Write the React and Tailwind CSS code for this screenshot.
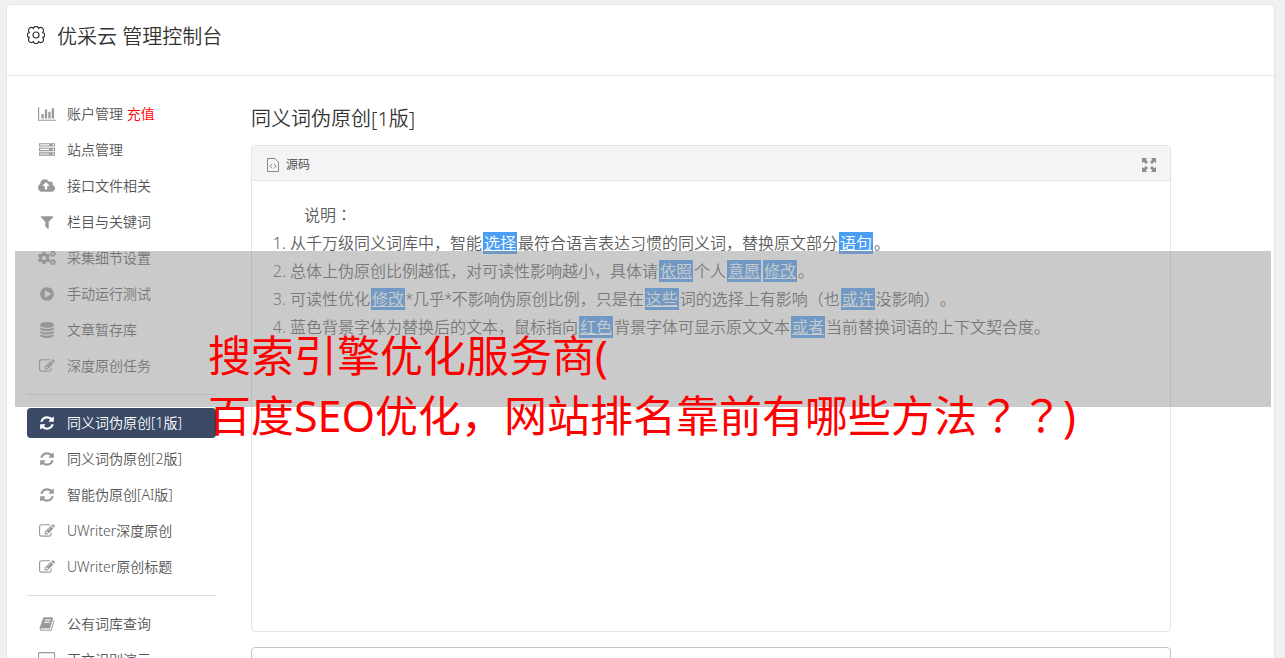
import { FaCogs } from 'react-icons/fa';

const paths = {
  chart: 'M640 896v512h-256v-512h256zm384-512v1024h-256v-1024h256zm1024 1152v128h-2048v-1536h128v1408h1920zm-640-896v768h-256v-768h256zm384-384v1152h-256v-1152h256z',
  server: 'M128 1408h1024v-128h-1024v128zm0-512h1024v-128h-1024v128zm1568 448q0-40-28-68t-68-28-68 28-28 68 28 68 68 28 68-28 28-68zm-1568-960h1024v-128h-1024v128zm1568 448q0-40-28-68t-68-28-68 28-28 68 28 68 68 28 68-28 28-68zm0-512q0-40-28-68t-68-28-68 28-28 68 28 68 68 28 68-28 28-68zm96 832v384h-1792v-384h1792zm0-512v384h-1792v-384h1792zm0-512v384h-1792v-384h1792z',
  cloud: 'M1280 864q0-14-9-23l-352-352q-9-9-23-9t-23 9l-351 351q-10 12-10 24 0 14 9 23t23 9h224v352q0 13 9.500 22.500t22.500 9.500h192q13 0 22.500-9.500t9.500-22.500v-352h224q13 0 22.500-9.500t9.500-22.500zm640 288q0 159-112.500 271.500t-271.500 112.500h-1088q-185 0-316.500-131.500t-131.500-316.500q0-130 70-240t188-165q-2-30-2-43 0-212 150-362t362-150q156 0 285.500 87t188.500 231q71-62 166-62 106 0 181 75t75 181q0 76-41 138 130 31 213.500 135.500t83.500 238.500z',
  filter: 'M1595 295q17 41-14 70l-493 493v742q0 42-39 59-13 5-25 5-27 0-45-19l-256-256q-19-19-19-45v-486l-493-493q-31-29-14-70 17-39 59-39h1280q42 0 59 39z',
  play: 'M896 128q209 0 385.500 103t279.500 279.500 103 385.500-103 385.500-279.500 279.500-385.500 103-385.500-103-279.500-279.500-103-385.500 103-385.500 279.500-279.500 385.500-103zm384 823q32-18 32-55t-32-55l-544-320q-31-19-64-1-32 19-32 56v640q0 37 32 56 16 8 32 8 17 0 32-9z',
  database: 'M896 768q237 0 443-43t325-127v170q0 69-103 128t-280 93.500-385 34.500-385-34.500-280-93.500-103-128v-170q119 84 325 127t443 43zm0 768q237 0 443-43t325-127v170q0 69-103 128t-280 93.500-385 34.500-385-34.500-280-93.500-103-128v-170q119 84 325 127t443 43zm0-384q237 0 443-43t325-127v170q0 69-103 128t-280 93.500-385 34.500-385-34.500-280-93.500-103-128v-170q119 84 325 127t443 43zm0-1152q208 0 385 34.500t280 93.500 103 128v128q0 69-103 128t-280 93.500-385 34.500-385-34.500-280-93.500-103-128v-128q0-69 103-128t280-93.500 385-34.500z',
  edit: 'M888 1184l116-116-152-152-116 116v56h96v96h56zm440-720q-16-16-33 1l-350 350q-17 17-1 33t33-1l350-350q17-17 1-33zm80 594v190q0 119-84.500 203.500t-203.500 84.500h-832q-119 0-203.500-84.500t-84.500-203.500v-832q0-119 84.500-203.500t203.500-84.500h832q63 0 117 25 15 7 18 23 3 17-9 29l-49 49q-14 14-32 8-23-6-45-6h-832q-66 0-113 47t-47 113v832q0 66 47 113t113 47h832q66 0 113-47t47-113v-126q0-13 9-22l64-64q15-15 35-7t20 29zm-96-738l288 288-672 672h-288v-288zm444 132l-92 92-288-288 92-92q28-28 68-28t68 28l152 152q28 28 28 68t-28 68z',
  refresh: 'M1639 1056q0 5-1 7-64 268-268 434.500t-478 166.500q-146 0-282.500-55t-243.500-157l-129 129q-19 19-45 19t-45-19-19-45v-448q0-26 19-45t45-19h448q26 0 45 19t19 45-19 45l-137 137q71 66 161 102t187 36q134 0 250-65t186-179q11-17 53-117 8-23 30-23h192q13 0 22.500 9.500t9.500 22.500zm25-800v448q0 26-19 45t-45 19h-448q-26 0-45-19t-19-45 19-45l138-138q-148-137-349-137-134 0-250 65t-186 179q-11 17-53 117-8 23-30 23h-199q-13 0-22.500-9.500t-9.500-22.500v-7q65-268 270-434.500t480-166.500q146 0 284 55.500t245 156.500l130-129q19-19 45-19t45 19 19 45z',
  book: 'M1703 478q40 57 18 129l-275 906q-19 64-76.500 107.500t-122.500 43.500h-923q-77 0-148.500-53.500t-99.500-131.500q-24-67-2-127 0-4 3-27t4-37q1-8-3-21.500t-3-19.500q2-11 8-21t16.500-23.500 16.500-23.500q23-38 45-91.500t30-91.500q3-10 .5-30t-.5-28q3-11 17-28t17-23q21-36 42-92t25-90q1-9-2.500-32t.5-28q4-13 22-30.500t22-22.500q19-26 42.500-84.500t27.500-96.500q1-8-3-25.500t-2-26.500q2-8 9-18t18-23 17-21q8-12 16.500-30.500t15-35 16-36 19.500-32 26.500-23.500 36-11.500 47.500 5.500l-1 3q38-9 51-9h761q74 0 114 56t18 130l-274 906q-36 119-71.500 153.500t-128.500 34.500h-869q-27 0-38 15-11 16-1 43 24 70 144 70h923q29 0 56-15.500t35-41.500l300-987q7-22 5-57 38 15 59 43zm-1064 2q-4 13 2 22.500t20 9.500h608q13 0 25.500-9.500t16.500-22.500l21-64q4-13-2-22.500t-20-9.500h-608q-13 0-25.500 9.500t-16.500 22.500zm-83 256q-4 13 2 22.500t20 9.500h608q13 0 25.500-9.500t16.500-22.500l21-64q4-13-2-22.500t-20-9.500h-608q-13 0-25.500 9.500t-16.500 22.500z',
  desktop: 'M1792 992v-832q0-13-9.500-22.500t-22.500-9.500h-1600q-13 0-22.500 9.500t-9.500 22.500v832q0 13 9.500 22.500t22.500 9.500h1600q13 0 22.500-9.500t9.500-22.500zm128-832v1088q0 66-47 113t-113 47h-544q0 37 16 77.500t32 71 16 43.500q0 26-19 45t-45 19h-512q-26 0-45-19t-19-45q0-14 16-44t32-70 16-78h-544q-66 0-113-47t-47-113v-1088q0-66 47-113t113-47h1600q66 0 113 47t47 113z',
};

// icons wider than one em
const widths = { chart: 2048, cloud: 1920, desktop: 1920 };

const navGroups = [
  [
    { label: '账户管理', icon: 'chart', extra: '充值' },
    { label: '站点管理', icon: 'server' },
    { label: '接口文件相关', icon: 'cloud' },
    { label: '栏目与关键词', icon: 'filter' },
    { label: '采集细节设置', icon: 'cogs' },
    { label: '手动运行测试', icon: 'play' },
    { label: '文章暂存库', icon: 'database' },
    { label: '深度原创任务', icon: 'edit' },
  ],
  [
    { label: '同义词伪原创[1版]', icon: 'refresh', active: true },
    { label: '同义词伪原创[2版]', icon: 'refresh' },
    { label: '智能伪原创[AI版]', icon: 'refresh' },
    { label: 'UWriter深度原创', icon: 'edit' },
    { label: 'UWriter原创标题', icon: 'edit' },
  ],
  [
    { label: '公有词库查询', icon: 'book' },
    { label: '正文识别演示', icon: 'desktop' },
  ],
];

function NavIcon({ name }) {
  if (name === 'cogs') return <FaCogs size={18} />;
  return (
    <svg className="h-4 w-auto" viewBox={`0 0 ${widths[name] || 1792} 1792`} fill="currentColor" aria-hidden="true">
      <path d={paths[name]} />
    </svg>
  );
}

function GearIcon() {
  return (
    <svg className="size-[18px]" viewBox="0 0 18 18" fill="none" stroke="currentColor" strokeWidth="1.200" aria-hidden="true">
      <path d="M6.400 2.300a2.700 2.700 0 0 1 5.200 0a2.700 2.700 0 0 1 4.100 4.100a2.700 2.700 0 0 1 0 5.200a2.700 2.700 0 0 1-4.100 4.100a2.700 2.700 0 0 1-5.200 0a2.700 2.700 0 0 1-4.100-4.100a2.700 2.700 0 0 1 0-5.200a2.700 2.700 0 0 1 4.100-4.100z" />
      <circle cx="9" cy="9" r="3" />
    </svg>
  );
}

function Word({ children }) {
  return (
    <a href="#" className="mx-px bg-[#4a9ff5] px-px text-white underline">
      {children}
    </a>
  );
}

// full-width punctuation centred in its cell
function Mark({ children }) {
  return (
    <span lang="zh-TW" className="font-['Noto_Sans_CJK_TC',sans-serif] leading-none">
      {children}
    </span>
  );
}

function Star() {
  return <span className="font-['Roboto',sans-serif] leading-none">*</span>;
}

function Sidebar() {
  return (
    <nav className="w-[189px] shrink-0">
      {navGroups.map((group, i) => (
        <ul key={i} className={`space-y-1.5 ${i > 0 ? 'mt-[13px] border-t border-[#dedede] pt-[13px]' : ''}`}>
          {group.map(({ label, icon, extra, active }) => (
            <li key={label}>
              <a
                href="#"
                className={`flex h-[30px] items-center gap-2.5 rounded px-2.5 text-sm whitespace-nowrap ${
                  active ? 'bg-[#3a4a66] text-white' : 'text-[#555]'
                }`}
              >
                <span className={`flex w-5 justify-center ${active ? 'text-white' : 'text-[#999]'}`}>
                  <NavIcon name={icon} />
                </span>
                <span>
                  {label}
                  {extra && <span className="text-[#f00]"> {extra}</span>}
                </span>
              </a>
            </li>
          ))}
        </ul>
      ))}
    </nav>
  );
}

function Editor() {
  return (
    <section className="rounded border border-[#e3e3e3]">
      <div className="flex h-[35px] items-center justify-between rounded-t border-b border-[#e3e3e3] bg-[#f4f4f4] px-3.5 pt-1">
        <button type="button" className="flex items-center gap-1.5 text-xs text-[#444]">
          <svg className="size-3.5" viewBox="0 0 14 14" fill="none" stroke="#888" aria-hidden="true">
            <path d="M1.500.5H9l3.500 3.500v9.500h-11zM6 6L4 8.200l2 2.200M8 6l2 2.200-2 2.200" />
          </svg>
          源码
        </button>
        <button type="button" aria-label="全屏">
          <svg className="size-3.5" viewBox="0 0 14 14" fill="#8c8c8c" aria-hidden="true">
            <path d="M0 0h5L3.700 1.700 6 4 4 6 1.700 3.700 0 5zM14 0v5l-1.700-1.300L10 6 8 4l2.300-2.300L9 0zM0 14V9l1.700 1.300L4 8l2 2-2.300 2.300L5 14zM14 14H9l1.300-1.700L8 10l2-2 2.300 2.300L14 9z" />
          </svg>
        </button>
      </div>
      <div className="min-h-[450px] px-5 pt-5 text-base leading-7 text-[#5c5c5c]">
        <p className="indent-8">说明<Mark>：</Mark></p>
        <ol className="list-decimal pl-[18px]">
          <li>从千万级同义词库中，智能<Word>选择</Word>最符合语言表达习惯的同义词，替换原文部分<Word>语句</Word>。</li>
          <li>总体上伪原创比例越低，对可读性影响越小，具体请<Word>依照</Word>个人<Word>意愿</Word><Word>修改</Word>。</li>
          <li>
            可读性优化<Word>修改</Word><Star />几乎<Star />不影响伪原创比例，只是在<Word>这些</Word>词的选择上有影响（也<Word>或许</Word>没影响）。
          </li>
          <li>蓝色背景字体为替换后的文本，鼠标指向<Word>红色</Word>背景字体可显示原文文本<Word>或者</Word>当前替换词语的上下文契合度。</li>
        </ol>
      </div>
    </section>
  );
}

export default function App() {
  return (
    <div
      lang="zh-CN"
      className="relative h-screen overflow-hidden bg-[#f0f0f0] px-1.5 pt-1 font-['Noto_Sans','Noto_Sans_CJK_SC',sans-serif] font-[350] [text-spacing-trim:space-all]"
    >
      <div className="mr-1 min-h-screen rounded border border-[#e4e4e4] bg-white">
        <header className="flex h-[71px] items-center gap-3 border-b border-[#e3e3e3] px-5 pb-2.5 text-[#333]">
          <GearIcon />
          <h1 className="pt-1 text-xl">优采云 管理控制台</h1>
        </header>
        <div className="flex gap-[35px] pt-[23px] pl-5">
          <Sidebar />
          <main className="mr-[103px] min-w-0 flex-1">
            <h2 className="mb-3 pt-1.5 text-xl text-[#333]">同义词伪原创[1版]</h2>
            <Editor />
            <textarea aria-label="输出" className="mt-[15px] block h-40 w-full resize-none rounded border border-[#c4c4c4]" />
          </main>
        </div>
      </div>

      {/* Banner over the page */}
      <div className="absolute top-[251px] right-3.5 left-[15px] h-[156px] bg-[#959595]/50" />
      <p className="absolute top-[326px] left-[208px] text-[43px] leading-[60px] font-normal whitespace-nowrap text-[#f00]">
        搜索引擎优化服务商(
        <br />
        百度SEO优化，网站排名靠前有哪些方法<Mark>？？</Mark>)
      </p>
    </div>
  );
}
